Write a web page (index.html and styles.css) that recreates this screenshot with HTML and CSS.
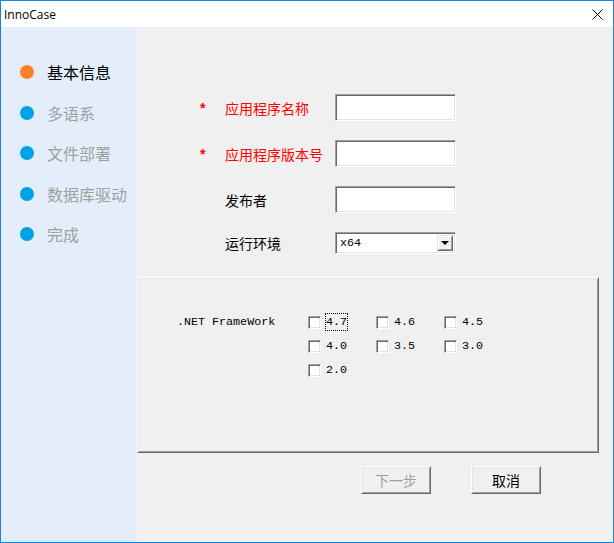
FILE: index.html
```html
<!DOCTYPE html>
<html lang="zh-CN">
<head>
  <meta charset="UTF-8">
  <title>InnoCase</title>
  <link rel="stylesheet" href="styles.css">
</head>
<body>
  <div class="window">
    <div class="titlebar">
      <span class="title">InnoCase</span>
      <svg class="close" width="11" height="11" viewBox="0 0 11 11">
        <path d="M0.5 0.5 L10.5 10.5 M10.5 0.5 L0.5 10.5" stroke="#000" stroke-width="1" fill="none"/>
      </svg>
    </div>
    <div class="client">
      <ul class="steps">
        <li class="step active"><span class="dot"></span>基本信息</li>
        <li class="step"><span class="dot"></span>多语系</li>
        <li class="step"><span class="dot"></span>文件部署</li>
        <li class="step"><span class="dot"></span>数据库驱动</li>
        <li class="step"><span class="dot"></span>完成</li>
      </ul>
      <div class="main">
        <div class="form">
          <span class="star">*</span>
          <label class="label required">应用程序名称</label>
          <input class="field" type="text">

          <span class="star">*</span>
          <label class="label required">应用程序版本号</label>
          <input class="field" type="text">

          <span class="star"></span>
          <label class="label">发布者</label>
          <input class="field" type="text">

          <span class="star"></span>
          <label class="label">运行环境</label>
          <div class="combo">
            <span class="combo-value">x64</span>
            <span class="combo-btn"><span class="arrow"></span></span>
          </div>
        </div>

        <div class="group">
          <div class="fw-grid">
            <span class="fw-label">.NET FrameWork</span>
            <label class="check"><span class="box"></span><span class="text focus">4.7</span></label>
            <label class="check"><span class="box"></span><span class="text">4.6</span></label>
            <label class="check"><span class="box"></span><span class="text">4.5</span></label>
            <span></span>
            <label class="check"><span class="box"></span><span class="text">4.0</span></label>
            <label class="check"><span class="box"></span><span class="text">3.5</span></label>
            <label class="check"><span class="box"></span><span class="text">3.0</span></label>
            <span></span>
            <label class="check"><span class="box"></span><span class="text">2.0</span></label>
          </div>
        </div>

        <div class="actions">
          <button class="btn" disabled>下一步</button>
          <button class="btn">取消</button>
        </div>
      </div>
    </div>
  </div>
</body>
</html>
```

FILE: styles.css
```css
body {
  margin: 0;
  padding: 0;
  font-family: "Noto Sans CJK SC", sans-serif;
}
.window {
  width: 614px;
  height: 543px;
  box-sizing: border-box;
  border: 1px solid #1883d7;
  display: flex;
  flex-direction: column;
  background: #f0f0f0;
}
.titlebar {
  height: 26px;
  background: #fff;
  display: flex;
  align-items: center;
  justify-content: space-between;
  padding: 0 10px 0 3px;
}
.title {
  font-family: "Open Sans", "Noto Sans", sans-serif;
  font-size: 12px;
  color: #000;
}
.close {
  display: block;
  margin-top: 0;
}
.client {
  flex: 1;
  display: flex;
}
.steps {
  width: 136px;
  margin: 0;
  padding: 25px 0 0 0;
  list-style: none;
  background: #e3eefa;
}
.step {
  height: 40.5px;
  display: flex;
  align-items: center;
  padding-left: 19px;
  font-size: 16px;
  color: #a0a0a0;
}
.step .dot {
  width: 14px;
  height: 14px;
  border-radius: 50%;
  background: #00a2e8;
  margin-right: 13px;
}
.step.active {
  color: #000;
}
.step.active .dot {
  background: #ff7f27;
}
.main {
  flex: 1;
  display: flex;
  flex-direction: column;
}
.form {
  margin: 67px 0 0 63px;
  display: grid;
  grid-template-columns: 25px 110px 121px;
  grid-template-rows: 27px 27px 27px 22px;
  row-gap: 19px;
  align-items: center;
  font-size: 14px;
}
.star {
  color: #ff0000;
  font-family: "Liberation Sans", sans-serif;
  font-weight: bold;
  font-size: 14px;
}
.label {
  color: #000;
}
.label.required {
  color: #ff0000;
}
.field,
.combo {
  box-sizing: border-box;
  width: 121px;
  margin: 0;
  background: #fff;
  border: 1px solid;
  border-color: #a0a0a0 #fff #fff #a0a0a0;
  box-shadow: inset 1px 1px #696969, inset -1px -1px #e3e3e3;
  outline: none;
}
.field {
  height: 27px;
}
.combo {
  height: 22px;
  display: flex;
  align-items: center;
  justify-content: space-between;
  padding: 2px;
}
.combo-value {
  font-family: "Liberation Mono", monospace;
  font-size: 11.7px;
  padding-left: 2px;
}
.combo-btn {
  width: 16px;
  height: 16px;
  box-sizing: border-box;
  background: #f0f0f0;
  border: 1px solid;
  border-color: #e3e3e3 #696969 #696969 #e3e3e3;
  box-shadow: inset 1px 1px #fff, inset -1px -1px #a0a0a0;
  display: flex;
  align-items: center;
  justify-content: center;
}
.arrow {
  width: 0;
  height: 0;
  border-left: 4px solid transparent;
  border-right: 4px solid transparent;
  border-top: 4px solid #000;
}
.group {
  width: 462px;
  height: 176px;
  box-sizing: border-box;
  margin-top: 23px;
  border: 1px solid;
  border-color: #fff #696969 #696969 #fff;
  box-shadow: inset 1px 1px #e3e3e3, inset -1px -1px #a0a0a0;
  padding: 32px 0 0 39px;
}
.fw-grid {
  display: grid;
  grid-template-columns: 131px 68px 68px 68px;
  grid-auto-rows: 24px;
  align-items: center;
  font-family: "Liberation Mono", monospace;
  font-size: 11.7px;
  color: #000;
}
.check {
  display: flex;
  align-items: center;
  gap: 5px;
}
.box {
  width: 13px;
  height: 13px;
  box-sizing: border-box;
  background: #fff;
  border: 1px solid;
  border-color: #a0a0a0 #fff #fff #a0a0a0;
  box-shadow: inset 1px 1px #696969, inset -1px -1px #e3e3e3;
}
.text {
  padding: 1px 0;
  border: 1px solid transparent;
  margin-left: -1px;
}
.text.focus {
  border: 1px dotted #000;
}
.actions {
  margin-top: 13px;
  display: flex;
  justify-content: flex-end;
  gap: 40px;
  padding-right: 72px;
}
.btn {
  width: 70px;
  height: 28px;
  box-sizing: border-box;
  background: #f0f0f0;
  border: 1px solid;
  border-color: #fff #696969 #696969 #fff;
  box-shadow: inset 1px 1px #e3e3e3, inset -1px -1px #a0a0a0;
  font-family: "Noto Sans CJK SC", sans-serif;
  font-size: 14px;
  color: #000;
  padding: 0;
}
.btn:disabled {
  color: #a0a0a0;
}
```
